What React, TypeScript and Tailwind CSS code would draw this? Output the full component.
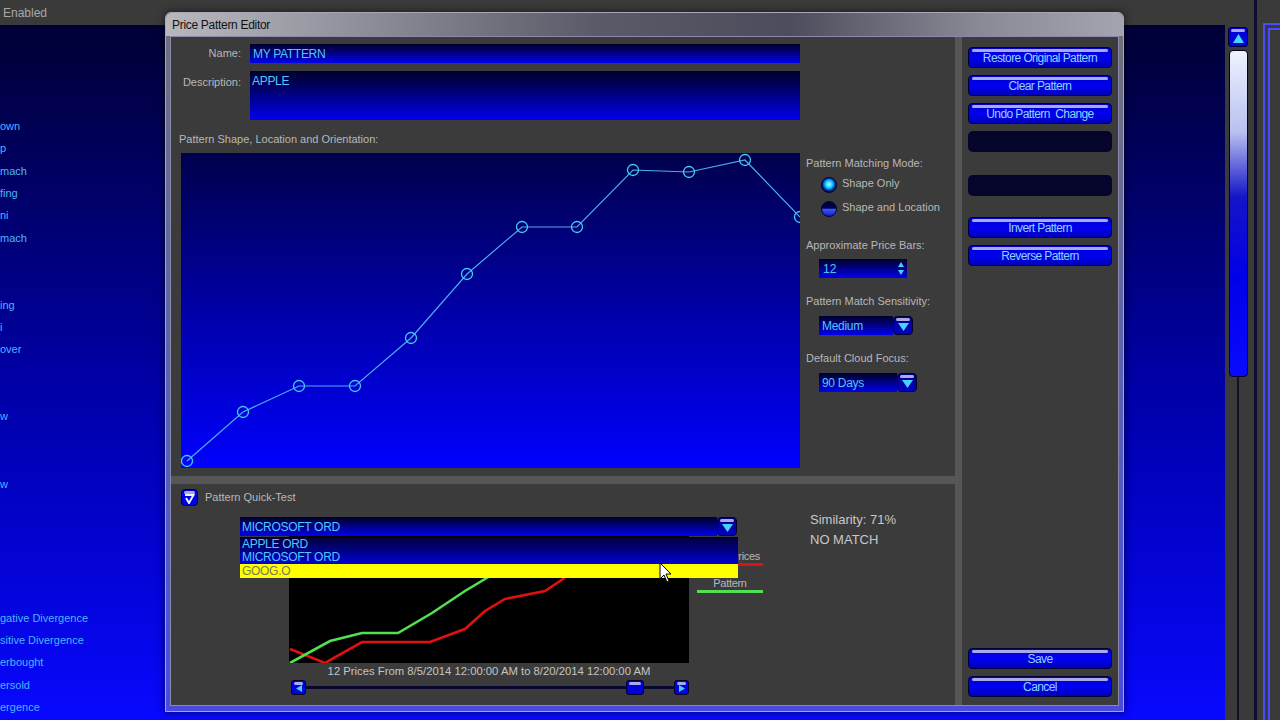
import React from "react";

const sideList = [
  "own", "p", "mach", "fing", "ni", "mach", "", "", "ing", "i", "over", "", "", "w", "", "", "w",
  "", "", "", "", "", "gative Divergence", "sitive Divergence", "erbought", "ersold", "ergence",
];

const pattern = [
  [6, 308], [62, 259], [118, 233], [174, 233], [230, 185], [286, 121],
  [341, 74], [396, 74], [452, 17], [508, 19], [564, 7], [619, 64],
];

const green = "1,122 41,100 73,92 109,92 143,72 176,50 201,35 231,15 251,3";
const red = "1,108 36,122 73,101 109,101 141,101 176,88 196,70 216,58 256,50 274,38 291,20";

function Shine({ inset = 3 }: { inset?: number }) {
  return (
    <div
      className={`absolute top-[1px] h-[3px] rounded-full bg-[#a9a9ea] ${inset === 3 ? "left-[3px] right-[3px]" : "left-[2px] right-[2px]"}`}
    />
  );
}

function BlueButton({ children }: { children?: React.ReactNode }) {
  return (
    <div className="relative h-[21px] rounded-[4px] border border-[#00003a] bg-linear-to-b from-[#0000c8] via-[#0000f4] to-[#0000b8] flex items-center justify-center text-[12px] tracking-[-0.6px] text-[#8fd3ff]">
      <Shine />
      <span className="relative mt-[1px]">{children}</span>
    </div>
  );
}

function EmptySlot() {
  return <div className="h-[21px] rounded-[5px] bg-[#05052c]" />;
}

function DropButton() {
  return (
    <div className="relative w-[20px] h-[19px] rounded-[4px] border border-[#00002a] bg-linear-to-b from-[#00007a] to-[#0000c8] flex items-center justify-center">
      <Shine inset={2} />
      <svg width="11" height="8" className="mt-[3px]">
        <path d="M0 0 H11 L5.5 8Z" fill="#43d2ff" />
      </svg>
    </div>
  );
}

function SmallArrow({ dir }: { dir: "left" | "right" }) {
  return (
    <div className="relative w-[15px] h-[15px] rounded-[3px] border border-[#00002a] bg-[#0000e0] flex items-center justify-center">
      <Shine inset={2} />
      <svg width="6" height="7" className="mt-[2px]">
        {dir === "left" ? <path d="M6 0 V7 L0 3.5Z" fill="#43d2ff" /> : <path d="M0 0 V7 L6 3.5Z" fill="#43d2ff" />}
      </svg>
    </div>
  );
}

function Radio({ on }: { on: boolean }) {
  return (
    <div
      className={`w-[16px] h-[16px] rounded-full border border-[#000030] ${
        on
          ? "bg-[radial-gradient(circle_at_50%_45%,#a0ffff_0,#10c8ff_35%,#0030a0_60%,#000040_75%)]"
          : "bg-[linear-gradient(to_bottom,#000040_0,#000050_45%,#3a5aff_50%,#1020c0_100%)]"
      }`}
    />
  );
}

const blueField = "bg-linear-to-b from-[#00002c] to-[#0000f0] text-[#4ec6ff]";

export default function App() {
  return (
    <div className="relative w-[1280px] h-[720px] overflow-hidden bg-[#3a3a3a] font-['Liberation_Sans',Arial,sans-serif]">
      {/* desktop behind the dialog */}
      <div className="flex flex-col h-full">
        <div className="h-[25px] flex items-center pl-[3px] text-[12px] text-[#a8a8a8]">Enabled</div>
        <div className="flex flex-1">
          <div className="w-[1225px] bg-linear-to-b from-[#000036] via-[#0000a4] to-[#0808ff] pt-[90px]">
            {sideList.map((t, i) => (
              <div key={i} className="h-[22.35px] leading-[22.35px] text-[11px] text-[#4ab6ff] whitespace-nowrap">
                {t}
              </div>
            ))}
          </div>
        </div>
      </div>

      {/* right strip: scrollbar and neighbour panel */}
      <div className="absolute right-0 top-0 w-[55px] h-full flex bg-[#3a3a3a]">
        <div className="ml-[3px] w-[20px] flex flex-col items-center pt-[27px]">
          <div className="relative w-[20px] h-[20px] rounded-[3px] bg-[#0000d8] border border-[#00002a] flex items-center justify-center">
            <Shine inset={2} />
            <svg width="11" height="9" className="mt-[3px]">
              <path d="M5.5 0 L11 9 H0Z" fill="#43d8ff" />
            </svg>
          </div>
          <div className="mt-[3px] w-[19px] h-[327px] rounded-[4px] border border-[#00002a] bg-[linear-gradient(to_bottom,#eef3ff_0,#b8c0f0_25%,#1414c8_45%,#0000e8_70%,#0a0aff_100%)]" />
          <div className="flex-1 w-[2px] bg-[#101028]" />
        </div>
        <div className="ml-[6px] w-[3px] bg-[#0c0c30]" />
        <div className="ml-[6px] flex-1 mt-[23px] border-l-2 border-t-2 border-[#4a4aff] pl-[3px] pt-[3px]">
          <div className="h-full border-l-2 border-t-2 border-[#4a4aff]" />
        </div>
      </div>

      {/* dialog window */}
      <div className="absolute left-[165px] top-[12px] w-[959px] h-[700px] rounded-t-[6px] border border-[#a8a8b8] bg-[#8a8a96] flex flex-col shadow-[0_0_8px_rgba(0,0,0,0.6)]">
        <div className="h-[23px] rounded-t-[6px] bg-[linear-gradient(to_right,#b8b8bc_0,#9a9aa4_15%,#5a5a68_45%,#4c4c5c_65%,#8a8a96_85%,#a4a4ae_100%)] flex items-center pl-[6px] text-[12px] tracking-[-0.3px] text-[#121212]">
          Price Pattern Editor
        </div>
        <div className="flex-1 flex flex-col px-[4px] pb-[5px] bg-linear-to-b from-[#707078] to-[#4a4ae0]">
          <div className="flex-1 flex bg-[#3b3b3b] border border-[#8a8ab0]">
            {/* left column */}
            <div className="w-[784px] flex flex-col">
              <div className="h-[439px] pt-[7px] text-[11px] text-[#b8b8b8]">
                <div className="flex items-center h-[19px]">
                  <div className="w-[70px] text-right">Name:</div>
                  <div className={`ml-[9px] w-[550px] h-[19px] pl-[3px] flex items-center text-[12px] tracking-[-0.3px] ${blueField}`}>
                    MY PATTERN
                  </div>
                </div>
                <div className="flex mt-[8px]">
                  <div className="w-[70px] text-right mt-[4px] leading-[14px]">Description:</div>
                  <div className={`ml-[9px] w-[550px] h-[49px] pl-[2px] pt-[1px] text-[12px] tracking-[-0.3px] ${blueField}`}>
                    APPLE
                  </div>
                </div>
                <div className="mt-[12px] ml-[8px] h-[14px] leading-[14px]">Pattern Shape, Location and Orientation:</div>
                <div className="flex mt-[7px]">
                  <div className="ml-[10px] w-[619px] h-[315px] bg-linear-to-b from-[#00004c] via-[#0000a8] to-[#0000ff]">
                    <svg width="619" height="315" className="overflow-hidden">
                      <polyline
                        points={pattern.map((p) => p.join(",")).join(" ")}
                        fill="none"
                        stroke="#4aaef0"
                        strokeWidth="1.2"
                      />
                      {pattern.map(([x, y], i) => (
                        <circle key={i} cx={x} cy={y} r="5.5" fill="none" stroke="#3fd0f0" strokeWidth="1.3" />
                      ))}
                    </svg>
                  </div>
                  <div className="ml-[6px] flex flex-col">
                    <div className="mt-[3px] h-[14px] leading-[14px]">Pattern Matching Mode:</div>
                    <div className="mt-[7px] flex items-center pl-[15px] h-[16px]">
                      <Radio on />
                      <span className="ml-[5px] -mt-[3px]">Shape Only</span>
                    </div>
                    <div className="mt-[8px] flex items-center pl-[15px] h-[16px]">
                      <Radio on={false} />
                      <span className="ml-[5px] -mt-[3px]">Shape and Location</span>
                    </div>
                    <div className="mt-[21px] h-[14px] leading-[14px]">Approximate Price Bars:</div>
                    <div className={`mt-[7px] ml-[13px] w-[88px] h-[19px] flex items-center justify-between pl-[4px] pr-[3px] text-[12px] ${blueField}`}>
                      <span>12</span>
                      <svg width="6" height="13">
                        <path d="M3 0 L6 5 H0Z M0 8 H6 L3 13Z" fill="#43d2ff" />
                      </svg>
                    </div>
                    <div className="mt-[16px] h-[14px] leading-[14px]">Pattern Match Sensitivity:</div>
                    <div className="mt-[8px] ml-[13px] flex">
                      <div className={`w-[74px] h-[19px] flex items-center pl-[3px] text-[12px] tracking-[-0.3px] ${blueField}`}>Medium</div>
                      <DropButton />
                    </div>
                    <div className="mt-[16px] h-[14px] leading-[14px]">Default Cloud Focus:</div>
                    <div className="mt-[8px] ml-[13px] flex">
                      <div className={`w-[78px] h-[19px] flex items-center pl-[3px] text-[12px] tracking-[-0.3px] ${blueField}`}>90 Days</div>
                      <DropButton />
                    </div>
                  </div>
                </div>
              </div>
              <div className="h-[8px] bg-[#565656]" />
              {/* quick test */}
              <div className="flex-1 flex">
                <div className="w-[630px] flex flex-col text-[11px] text-[#b8b8b8]">
                  <div className="mt-[5px] ml-[10px] flex items-center h-[17px]">
                    <div className="relative w-[17px] h-[17px] rounded-[4px] border border-[#00002a] bg-[#0000e8] flex items-center justify-center">
                      <Shine inset={2} />
                      <svg width="11" height="11" className="mt-[2px]">
                        <path d="M1 2 H9.5 L5 10 L2 5" fill="none" stroke="#e8f4ff" strokeWidth="2" />
                      </svg>
                    </div>
                    <span className="ml-[7px]">Pattern Quick-Test</span>
                  </div>
                  <div className="relative mt-[11px]">
                    <div className="ml-[69px] flex">
                      <div className={`w-[477px] h-[19px] flex items-center pl-[2px] text-[12px] tracking-[-0.3px] ${blueField}`}>
                        MICROSOFT ORD
                      </div>
                      <DropButton />
                    </div>
                    <div className="ml-[118px] flex">
                      <div className="w-[400px] h-[127px] bg-black">
                        <svg width="400" height="127">
                          <polyline points={red} fill="none" stroke="#e01010" strokeWidth="2.6" transform="translate(0,5)" />
                          <polyline points={green} fill="none" stroke="#52e052" strokeWidth="2.6" transform="translate(0,5)" />
                        </svg>
                      </div>
                      <div className="ml-[8px] w-[66px] flex flex-col text-[11px] tracking-[-0.3px]">
                        <div className="mt-[14px] h-[13px] leading-[13px] text-right pr-[3px]">Prices</div>
                        <div className="h-[3px] bg-[#e01010]" />
                        <div className="mt-[11px] h-[13px] leading-[13px] text-center">Pattern</div>
                        <div className="h-[3px] bg-[#52e052]" />
                      </div>
                    </div>
                    {/* open dropdown list */}
                    <div className="absolute left-[69px] top-[20px] w-[498px] text-[12px] tracking-[-0.3px]">
                      <div className="bg-linear-to-b from-[#00003a] to-[#0000d8] text-[#4ec6ff] pl-[2px]">
                        <div className="h-[13px] leading-[14px]">APPLE ORD</div>
                        <div className="h-[14px] leading-[14px]">MICROSOFT ORD</div>
                      </div>
                      <div className="h-[14px] leading-[14px] bg-[#ffff00] text-[#7a7a5a] pl-[2px]">GOOG.O</div>
                    </div>
                  </div>
                  <div className="ml-[118px] w-[400px] text-center h-[14px] leading-[14px] mt-[1px] text-[11.3px] text-[#c4c4c4]">
                    12 Prices From 8/5/2014 12:00:00 AM to 8/20/2014 12:00:00 AM
                  </div>
                  <div className="ml-[120px] mt-[2px] w-[398px] flex items-center">
                    <SmallArrow dir="left" />
                    <div className="flex-1 flex items-center">
                      <div className="flex-1 h-[3px] bg-[#08082e]" />
                      <div className="relative w-[18px] h-[15px] rounded-[3px] border border-[#00002a] bg-[#0000d8]">
                        <Shine inset={2} />
                      </div>
                      <div className="w-[30px] h-[3px] bg-[#08082e]" />
                    </div>
                    <SmallArrow dir="right" />
                  </div>
                </div>
                <div className="ml-[9px] mt-[26px] text-[13px] text-[#c8c8c8] leading-[20px]">
                  <div>Similarity: 71%</div>
                  <div>NO MATCH</div>
                </div>
              </div>
            </div>
            <div className="w-[7px] bg-[#565656]" />
            {/* right column */}
            <div className="flex-1 flex flex-col px-[6px] pt-[10px] pb-[8px]">
              <BlueButton>Restore Original Pattern</BlueButton>
              <div className="mt-[7px]"><BlueButton>Clear Pattern</BlueButton></div>
              <div className="mt-[7px]"><BlueButton>Undo Pattern&nbsp; Change</BlueButton></div>
              <div className="mt-[7px]"><EmptySlot /></div>
              <div className="mt-[23px]"><EmptySlot /></div>
              <div className="mt-[21px]"><BlueButton>Invert Pattern</BlueButton></div>
              <div className="mt-[7px]"><BlueButton>Reverse Pattern</BlueButton></div>
              <div className="mt-auto"><BlueButton>Save</BlueButton></div>
              <div className="mt-[7px]"><BlueButton>Cancel</BlueButton></div>
            </div>
          </div>
        </div>
      </div>

      {/* mouse pointer */}
      <svg className="absolute left-[659px] top-[562px]" width="13" height="21" viewBox="0 0 13 21">
        <path d="M1 1 V17 L5 13 L8 20 L10 19 L7 12 H12Z" fill="#fff" stroke="#000" strokeWidth="1" />
      </svg>
    </div>
  );
}
